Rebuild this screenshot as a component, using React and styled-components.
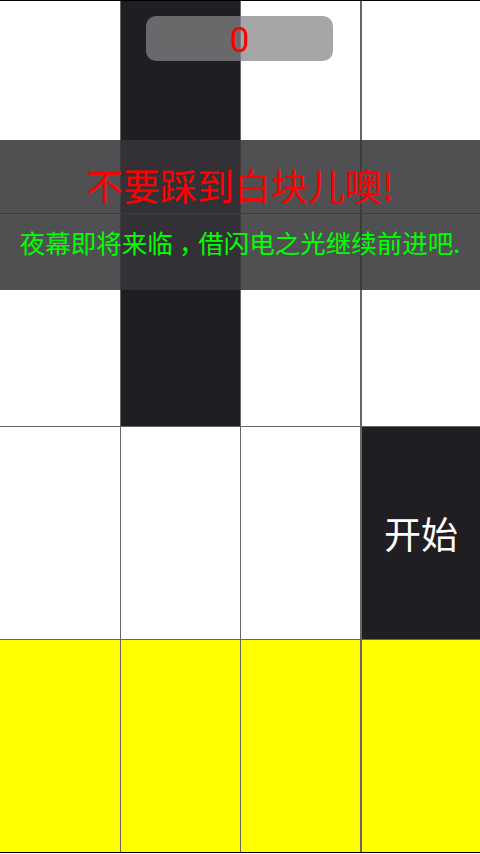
import styled, { createGlobalStyle } from "styled-components";

const GlobalStyle = createGlobalStyle`
  html, body {
    margin: 0;
    padding: 0;
    background: #fff;
  }
  body {
    font-family: Roboto, "Noto Sans CJK SC", sans-serif;
  }
`;

const BOARD = [
  ["white", "black", "white", "white"],
  ["white", "black", "white", "white"],
  ["white", "white", "white", "start"],
  ["yellow", "yellow", "yellow", "yellow"],
];

const TILE_COLORS = {
  white: "#ffffff",
  black: "#201e22",
  start: "#201e22",
  yellow: "#ffff00",
};

// width of the line drawn on the left of each column
const LEFT_LINE = [0, 1, 1, 2];

const Screen = styled.div`
  position: relative;
  width: 480px;
  height: 854px;
  overflow: hidden;
  border-top: 1px solid #000;
  box-sizing: border-box;
`;

const Row = styled.div`
  display: grid;
  grid-template-columns: 120px 120px 120px 120px;
  height: 213px;
  box-sizing: border-box;
  border-bottom: 1px solid ${(p) => (p.$last ? "#000" : "#666")};
`;

const Tile = styled.div`
  display: flex;
  align-items: center;
  justify-content: center;
  box-sizing: border-box;
  background: ${(p) => TILE_COLORS[p.$kind]};
  border-left: ${(p) => (p.$line ? `${p.$line}px solid #666` : "none")};
  color: #fff;
  font-family: "Noto Sans CJK SC", sans-serif;
  font-size: 37px;
`;

const Score = styled.div`
  position: absolute;
  top: 15px;
  left: 146px;
  width: 187px;
  height: 45px;
  border-radius: 10px;
  background: rgba(133, 133, 135, 0.73);
  display: flex;
  align-items: center;
  justify-content: center;
  padding-top: 3px;
  box-sizing: border-box;
  color: #ff0000;
  font-family: Roboto, sans-serif;
  font-size: 35px;
  line-height: 1;
`;

const Banner = styled.div`
  position: absolute;
  top: 139px;
  left: 0;
  width: 480px;
  height: 150px;
  background: rgba(54, 53, 56, 0.87);
  display: flex;
  flex-direction: column;
  align-items: center;
  font-family: "Noto Sans CJK SC", sans-serif;
`;

const Title = styled.div`
  margin-top: 22px;
  color: #ff0000;
  font-size: 37px;
  line-height: 46px;
  white-space: nowrap;
`;

const Subtitle = styled.div`
  margin-top: 17px;
  color: #00ff00;
  font-size: 25.5px;
  line-height: 34px;
  white-space: nowrap;
`;

// full-width comma drawn centred in its cell, as the phone font does
const Punct = styled.span`
  display: inline-block;
  width: 1em;
  text-align: center;
  font-feature-settings: "halt";
`;

export default function App() {
  return (
    <>
      <GlobalStyle />
      <Screen>
        {BOARD.map((row, r) => (
          <Row key={r} $last={r === BOARD.length - 1}>
            {row.map((kind, c) => (
              <Tile key={c} $kind={kind} $line={LEFT_LINE[c]}>
                {kind === "start" ? "开始" : null}
              </Tile>
            ))}
          </Row>
        ))}
        <Score>0</Score>
        <Banner>
          <Title>不要踩到白块儿噢!</Title>
          <Subtitle>
            夜幕即将来临<Punct>，</Punct>借闪电之光继续前进吧.
          </Subtitle>
        </Banner>
      </Screen>
    </>
  );
}
